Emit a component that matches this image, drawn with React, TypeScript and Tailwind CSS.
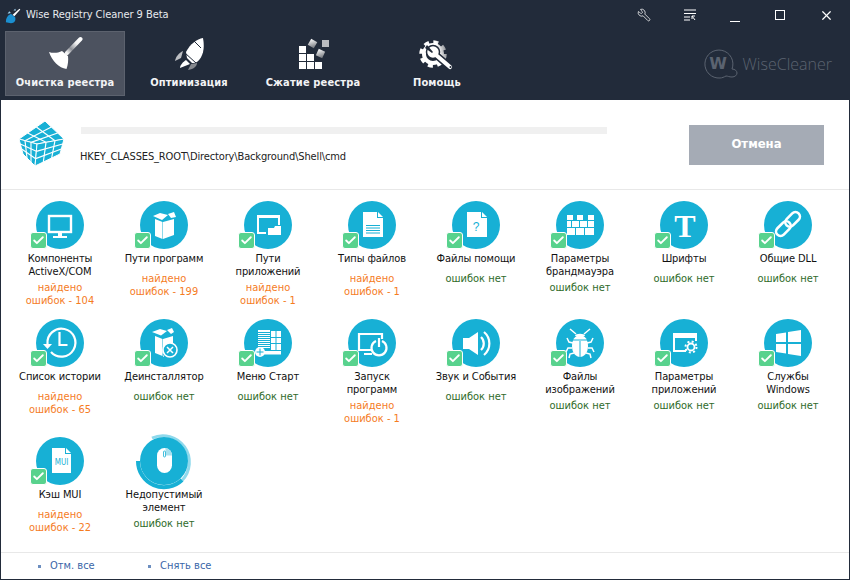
import { ReactNode } from "react";
import { Check, X, Wrench } from "lucide-react";

const font = "font-['DejaVu_Sans_Condensed','DejaVu_Sans',sans-serif]";

// icons inside the blue circles, all on a 48x48 box
const Monitor = () => (
  <>
    <rect x="13" y="15" width="22" height="16" fill="none" stroke="#fff" strokeWidth="2.4" />
    <path d="M22 32h4v3h5v2H17v-2h5z" fill="#fff" />
  </>
);
const Box = () => (
  <>
    <path d="M15 18l7.500 3v17l-7.500-3z" fill="#fff" />
    <path d="M23 21l11-3v16l-11 4z" fill="#fff" />
    <path d="M13 15l7-3 8 2-6 5zM28 13l6-2 2 5-5 1z" fill="#fff" />
  </>
);
const Windows2 = () => (
  <>
    <path d="M13 14h23v10h-2v-7H15v14h7v2H13z" fill="#fff" />
    <path d="M24 27h6l1-2h6v9H24z" fill="#fff" />
  </>
);
const FileLines = () => (
  <>
    <path d="M15 11h14v6h6v19H15z" fill="#fff" />
    <path d="M30 11l5 5h-5z" fill="#fff" />
    <path d="M18 24.500h14M18 27h14M18 29.500h14M18 32h14" stroke="#17b0d5" strokeWidth="1" />
  </>
);
const FileHelp = () => (
  <>
    <path d="M15 11h14v6h6v19H15z" fill="#fff" />
    <path d="M30 11l5 5h-5z" fill="#fff" />
    <text x="24" y="30" textAnchor="middle" fontSize="12" fill="#17b0d5" fontFamily="Liberation Sans">?</text>
  </>
);
const Firewall = () => (
  <path
    d="M11 14h6v5h-6zM21 14h6v5h-6zM32 14h6v5h-6zM11 20h4v6h-4zM16 20h7v6h-7zM24 20h7v6h-7zM32 20h6v6h-6zM11 27h8v7h-8zM20 27h8v7h-8zM29 27h9v7h-9z"
    fill="#fff"
  />
);
const SerifT = () => (
  <text x="25" y="36" textAnchor="middle" fontSize="32" fontWeight="700" fill="#fff" fontFamily="Liberation Serif">T</text>
);
const Link2 = () => (
  <g fill="none" stroke="#fff" strokeWidth="2.600" transform="rotate(-45 24 23)">
    <rect x="9" y="18.500" width="17" height="9" rx="4.500" />
    <rect x="22" y="18.500" width="17" height="9" rx="4.500" />
  </g>
);
const History = () => (
  <>
    <path d="M11.500 25A14 14 0 1 1 15 33" fill="none" stroke="#fff" strokeWidth="2.200" />
    <path d="M7 25h9l-4.500 5z" fill="#fff" />
    <path d="M23.500 13v13h8" fill="none" stroke="#fff" strokeWidth="2.200" />
  </>
);
const Uninstall = () => (
  <>
    <path d="M15 17l7.500 3v17l-7.500-3z" fill="#fff" />
    <path d="M23 20l10-3v7a9 9 0 0 0-9 13.500l-1 .5z" fill="#fff" />
    <path d="M12 13l8-3 7 2-6 4.500zM27 11l5-2 2 4-3 2z" fill="#fff" />
    <circle cx="30" cy="31" r="7" fill="#17b0d5" stroke="#fff" strokeWidth="1.600" />
    <path d="M27 28l6 6m0-6l-6 6" stroke="#fff" strokeWidth="1.500" />
  </>
);
const StartMenu = () => (
  <>
    <path d="M14 11h12v2H14zM14 14h12v1H14zM14 16h12v1H14zM14 18h12v1H14zM14 20h12v1H14zM14 22h12v1H14zM14 24h12v1H14zM14 26h12v1H14zM14 28h12v1H14z" fill="#fff" />
    <path d="M27 12h4.500v6H27zM32.500 12H37v6h-4.500zM27 19h4.500v5H27zM32.500 19H37v5h-4.500zM27 25h4.500v6H27zM32.500 25H37v6h-4.500z" fill="#fff" />
    <path d="M18 32h19v3.500H18z" fill="#fff" />
    <circle cx="16" cy="33" r="5" fill="#fff" />
    <path d="M16 29.500v7M12.500 33h7" stroke="#17b0d5" strokeWidth="1" />
  </>
);
const Startup = () => (
  <>
    <path d="M24 31H11V15h23v5" fill="none" stroke="#fff" strokeWidth="2.200" />
    <path d="M16 34h8v2H16z" fill="#fff" />
    <path d="M28 22a7.500 7.500 0 1 0 6 0" fill="none" stroke="#fff" strokeWidth="2.200" />
    <path d="M31 19v9" stroke="#fff" strokeWidth="2.200" />
  </>
);
const Sound = () => (
  <>
    <path d="M11 19h6l9-6v23l-9-6h-6z" fill="#fff" />
    <path d="M29 18a9 9 0 0 1 0 13" fill="none" stroke="#fff" strokeWidth="2.200" />
    <path d="M32 13a15 15 0 0 1 0 23" fill="none" stroke="#fff" strokeWidth="2.200" />
  </>
);
const Bug = () => (
  <>
    <path d="M24 16c-5 0-8 5-8 11 0 7 4 11 8 11s8-4 8-11c0-6-3-11-8-11z" fill="#fff" />
    <path d="M24 22v16M17 21h14" stroke="#17b0d5" strokeWidth="1" />
    <path d="M19 17c0-3 10-3 10 0z" fill="#fff" />
    <path
      d="M20 15l-6-5M28 15l6-5M17 24l-4-1-2-4M31 24l4-1 2-4M16 29h-4l-2 4M32 29h4l2 4M18 34l-4 1-1 4M30 34l4 1 1 4"
      fill="none"
      stroke="#fff"
      strokeWidth="1.500"
    />
  </>
);
const AppSettings = () => (
  <>
    <path d="M13 14h24v8h-2v-3H15v12h11v2H13z" fill="#fff" />
    <circle cx="31" cy="28" r="3.500" fill="none" stroke="#fff" strokeWidth="1.800" />
    <circle cx="31" cy="28" r="5.500" fill="none" stroke="#fff" strokeWidth="2" strokeDasharray="2 2.320" />
  </>
);
const WinLogo = () => (
  <path d="M12 15l10-1.500V23H12zM24 13l13-2v12H24zM12 25h10v9.500L12 33zM24 25h13v12l-13-2z" fill="#fff" />
);
const FileMui = () => (
  <>
    <path d="M16 11h13v6h6v19H16z" fill="#fff" />
    <path d="M30 11l5 5h-5z" fill="#fff" />
    <text x="25.500" y="28" textAnchor="middle" fontSize="8" fill="#17b0d5" fontFamily="DejaVu Sans Condensed">MUI</text>
  </>
);
const Mouse = () => (
  <>
    <rect x="17" y="11" width="15" height="25" rx="7.500" fill="#fff" />
    <path d="M25.500 11a7.500 7.500 0 0 1 6.500 7.500h-6.500z" fill="#a5e0ef" />
    <rect x="23.500" y="14" width="2" height="6" rx="1" fill="#fff" stroke="#17b0d5" strokeWidth=".8" />
  </>
);

type Entry = {
  label: string[];
  icon: ReactNode;
  errors?: number;
  busy?: boolean;
};

const entries: Entry[] = [
  { label: ["Компоненты", "ActiveX/COM"], icon: <Monitor />, errors: 104 },
  { label: ["Пути программ"], icon: <Box />, errors: 199 },
  { label: ["Пути", "приложений"], icon: <Windows2 />, errors: 1 },
  { label: ["Типы файлов"], icon: <FileLines />, errors: 1 },
  { label: ["Файлы помощи"], icon: <FileHelp /> },
  { label: ["Параметры", "брандмауэра"], icon: <Firewall /> },
  { label: ["Шрифты"], icon: <SerifT /> },
  { label: ["Общие DLL"], icon: <Link2 /> },
  { label: ["Список истории"], icon: <History />, errors: 65 },
  { label: ["Деинсталлятор"], icon: <Uninstall /> },
  { label: ["Меню Старт"], icon: <StartMenu /> },
  { label: ["Запуск", "программ"], icon: <Startup />, errors: 1 },
  { label: ["Звук и События"], icon: <Sound /> },
  { label: ["Файлы", "изображений"], icon: <Bug /> },
  { label: ["Параметры", "приложений"], icon: <AppSettings /> },
  { label: ["Службы", "Windows"], icon: <WinLogo /> },
  { label: ["Кэш MUI"], icon: <FileMui />, errors: 22 },
  { label: ["Недопустимый", "элемент"], icon: <Mouse />, busy: true },
];

const CheckBadge = () => (
  <div className="absolute left-[-6px] top-[31px] w-[17px] h-[17px] rounded-[3px] bg-[#58d28d] border border-white flex items-center justify-center">
    <Check size={13} color="#fff" strokeWidth={3.4} />
  </div>
);

const ScanItem = ({ entry }: { entry: Entry }) => {
  const two = entry.label.length > 1;
  return (
    <div className="flex flex-col items-center h-[118px]">
      <div className="relative w-12 h-12">
        <svg viewBox="0 0 48 48" className="w-12 h-12 overflow-visible">
          {entry.busy && (
            <>
              <path d="M12 1A26.500 26.500 0 0 1 42 43.500" fill="none" stroke="#8fd9ec" strokeWidth="3" />
              <path d="M42 43A26 26 0 0 1 -2 24" fill="none" stroke="#17b0d5" strokeWidth="4" />
            </>
          )}
          <circle cx="24" cy="24" r="24" fill="#17b0d5" />
          {entry.icon}
        </svg>
        {!entry.busy && <CheckBadge />}
      </div>
      <div className="mt-[3px] text-[#111] text-center leading-[13px] tracking-[-.1px]">
        {entry.label.map((l) => (
          <div key={l}>{l}</div>
        ))}
      </div>
      {entry.errors !== undefined ? (
        <div className={`${two ? "mt-[3px]" : "mt-[7px]"} text-[#f57c1f] text-center leading-[13px]`}>
          <div>найдено</div>
          <div>ошибок - {entry.errors}</div>
        </div>
      ) : (
        <div className={`${two ? "mt-[3px]" : "mt-[7px]"} text-[#2f6b2a] text-center leading-[13px]`}>ошибок нет</div>
      )}
    </div>
  );
};

const Broom = () => (
  <svg viewBox="0 0 36 36" className="w-9 h-9">
    <defs>
      <linearGradient id="broomHandle" gradientUnits="userSpaceOnUse" x1="33" y1="5" x2="20" y2="19">
        <stop offset="0" stopColor="#fff" />
        <stop offset=".3" stopColor="#f0f0f0" />
        <stop offset=".7" stopColor="#8d9097" />
        <stop offset="1" stopColor="#f5f5f5" />
      </linearGradient>
    </defs>
    <path d="M33.500 5L20 19" stroke="url(#broomHandle)" strokeWidth="4" strokeLinecap="round" />
    <path d="M2 18c4 1.500 9 1 13-1l6 5c.5 4 0 9-1.500 13C12 34 5 27 2 18z" fill="#fff" />
  </svg>
);
const Rocket = () => (
  <svg viewBox="0 0 36 36" className="w-9 h-9">
    <path d="M32 4c-6 1-13 6-17 14l1 6 5 5c1 0 3 0 5-1 6-5 8-13 6-24z" fill="#fff" />
    <path d="M23 7l7 7M14 19l11 10" stroke="#222b3a" strokeWidth="1" />
    <path d="M12 17c-4 2-7 5-8 10l6-3z" fill="#bcbec2" />
    <path d="M15 26l4 4-10 4c0-3 3-6 6-8z" fill="#fff" />
    <path d="M26 29c0 3-3 6-9 7l3-6z" fill="#85888e" />
  </svg>
);
const Blocks = () => (
  <svg viewBox="0 0 36 36" className="w-9 h-9">
    <defs>
      <linearGradient id="blockFade" x1="0" y1="0" x2="1" y2="1">
        <stop offset="0" stopColor="#fff" />
        <stop offset="1" stopColor="#6f7278" />
      </linearGradient>
    </defs>
    <path d="M4 12h7v7H4zM4 20h7v7H4zM12 20h7v7h-7zM4 28h7v7H4zM12 28h7v7h-7zM20 28h7v7h-7z" fill="#fff" />
    <rect x="14" y="6" width="7" height="7" fill="url(#blockFade)" transform="rotate(30 17.500 9.500)" />
    <rect x="27" y="6" width="7" height="7" fill="#b9bbbf" />
    <rect x="22" y="16" width="7" height="7" fill="url(#blockFade)" transform="rotate(25 25.500 19.500)" />
  </svg>
);
const GearWrench = () => (
  <svg viewBox="0 0 36 36" className="w-9 h-9">
    <defs>
      <linearGradient id="gearFade" gradientUnits="userSpaceOnUse" x1="6" y1="20" x2="30" y2="14">
        <stop offset=".55" stopColor="#fff" />
        <stop offset="1" stopColor="#5f636b" />
      </linearGradient>
    </defs>
    <circle cx="14" cy="20" r="9" fill="none" stroke="url(#gearFade)" strokeWidth="4" />
    <circle cx="14" cy="20" r="12" fill="none" stroke="url(#gearFade)" strokeWidth="3.500" strokeDasharray="5 4.425" />
    <path d="M17 21l14 12" stroke="#222b3a" strokeWidth="7" strokeLinecap="round" />
    <circle cx="14" cy="18" r="6.500" fill="#fff" stroke="#222b3a" strokeWidth="1.500" />
    <path d="M17 21l14 12" stroke="#fff" strokeWidth="4.200" strokeLinecap="round" />
    <path d="M8 11l6 7-1 1-7-5z" fill="#222b3a" />
    <circle cx="31.500" cy="33" r="1" fill="#222b3a" />
  </svg>
);

const tabs = [
  { name: "Очистка реестра", icon: <Broom />, active: true },
  { name: "Оптимизация", icon: <Rocket /> },
  { name: "Сжатие реестра", icon: <Blocks /> },
  { name: "Помощь", icon: <GearWrench /> },
];

type Pt = [number, number];
const mix = (a: Pt, b: Pt, t: number): Pt => [a[0] + (b[0] - a[0]) * t, a[1] + (b[1] - a[1]) * t];

// one cube face with its 3x3 grid lines
const Face = ({ a, b, c, d }: { a: Pt; b: Pt; c: Pt; d: Pt }) => {
  const lines: [Pt, Pt][] = [];
  [1 / 3, 2 / 3].forEach((t) => {
    lines.push([mix(a, b, t), mix(d, c, t)]);
    lines.push([mix(a, d, t), mix(b, c, t)]);
  });
  return (
    <>
      <polygon points={[a, b, c, d].map((p) => p.join(",")).join(" ")} fill="#18b0d5" stroke="#fff" strokeWidth="3" />
      {lines.map(([p, q], i) => (
        <line key={i} x1={p[0]} y1={p[1]} x2={q[0]} y2={q[1]} stroke="#fff" strokeWidth="3.500" />
      ))}
    </>
  );
};

const Cube = () => (
  <svg viewBox="0 0 180 165" className="w-[60px] h-[55px] shrink-0">
    <Face a={[27, 66]} b={[105, 12]} c={[162, 66]} d={[81, 81]} />
    <Face a={[27, 66]} b={[81, 81]} c={[75, 147]} d={[39, 111]} />
    <Face a={[81, 81]} b={[162, 66]} c={[150, 111]} d={[75, 147]} />
  </svg>
);

export default function App() {
  return (
    <div className={`w-[850px] h-[580px] flex flex-col bg-white border-x border-b border-[#222b3a] overflow-hidden text-[11px] ${font}`}>
      <header className="h-[100px] shrink-0 bg-[#222b3a] -mx-px">
        <div className="h-[31px] flex items-center pl-[5px] text-[#e8eaee] relative">
          <svg viewBox="0 0 20 20" className="w-[17px] h-[17px] mr-[4px]">
            <path d="M1 18c0-5 2-8 6-10l5 4c1 4-1 7-5 7z" fill="#1b8fd0" />
            <path d="M9 9l8-7 1 1-7 8z" fill="#fff" />
            <path d="M3 8l2-3 2 2zM10 4l2-2 1 2z" fill="#9fd3ef" />
          </svg>
          <span className="text-[11px] tracking-[-.05px]">Wise Registry Cleaner 9 Beta</span>
          <div className="absolute right-0 top-0 h-[30px] flex items-center text-white">
            <div className="w-[46px] flex justify-center">
              <Wrench size={14} strokeWidth={1.300} className="-scale-x-100" />
            </div>
            <div className="w-[46px] flex justify-center">
              <svg viewBox="0 0 12 12" className="w-3 h-3" fill="none" stroke="#fff">
                <path d="M0 1h12M0 4.500h12M0 8h6M0 11h6" />
                <path d="M8 7h3M8 7v3M8 7l3 4" />
              </svg>
            </div>
            <div className="w-[44px] flex justify-center items-end h-[14px]">
              <div className="w-[10px] h-px bg-white" />
            </div>
            <div className="w-[46px] flex justify-center">
              <div className="w-[10px] h-[10px] border border-white" />
            </div>
            <div className="w-[46px] flex justify-center mr-[1px]">
              <X size={15} strokeWidth={1.200} absoluteStrokeWidth />
            </div>
          </div>
        </div>
        <div className="flex items-start pl-[5px] gap-1 relative">
          {tabs.map((t) => (
            <div
              key={t.name}
              className={`w-[120px] h-[65px] flex flex-col items-center pt-[2px] border ${t.active ? "bg-[#4c525f] border-[#5c626e]" : "border-transparent"}`}
            >
              {t.icon}
              <span className="mt-[6px] font-bold text-[#f2f3f5] text-[11px] leading-[14px] tracking-[.15px]">{t.name}</span>
            </div>
          ))}
          <div className="absolute right-[18px] top-[18px] flex items-center text-[#5b6370]">
            <svg viewBox="0 0 36 30" className="w-[36px] h-[30px]">
              <path
                d="M17 29A14 14 0 1 1 29 20c3 0 5 2 5 4s-2 4-5 4c-3 0-4-1-6-1-2 1-4 2-6 2z"
                fill="none"
                stroke="#5b6370"
                strokeWidth="1"
              />
              <text x="15" y="20" textAnchor="middle" fontSize="16" fontWeight="700" fill="#5b6370" fontFamily="DejaVu Sans">W</text>
            </svg>
            <span className="text-[16px] ml-[4px] font-['Open_Sans',sans-serif] font-light">WiseCleaner</span>
          </div>
        </div>
      </header>

      <section className="h-[90px] shrink-0 border-b border-[#e8e8e8] flex items-center pl-[9px] pr-[25px]">
        <Cube />
        <div className="w-[527px] ml-[10px] self-start pt-[27px]">
          <div className="h-[7px] bg-[#f0f0f0] ml-[1px]" />
          <div className="mt-[16px] text-[#222] leading-[13px] tracking-[-.14px]">HKEY_CLASSES_ROOT\Directory\Background\Shell\cmd</div>
        </div>
        <button className="ml-auto w-[135px] h-10 pb-[2px] bg-[#a5abb5] text-white font-bold text-[13px]">Отмена</button>
      </section>

      <main className="flex-1 min-h-0 pt-[11px] pl-[7px] grid grid-cols-[repeat(8,104px)] auto-rows-[118px]">
        {entries.map((e) => (
          <ScanItem key={e.label.join(" ")} entry={e} />
        ))}
      </main>

      <footer className="h-[27px] shrink-0 border-t border-[#e8e8e8] pt-[1px] flex items-center text-[#3a66a8]">
        <div className="flex items-center ml-[37px] w-[110px]">
          <span className="w-[3px] h-[3px] bg-[#6d8fc0] mr-[9px]" />
          Отм. все
        </div>
        <div className="flex items-center">
          <span className="w-[3px] h-[3px] bg-[#6d8fc0] mr-[9px]" />
          Снять все
        </div>
      </footer>
    </div>
  );
}
